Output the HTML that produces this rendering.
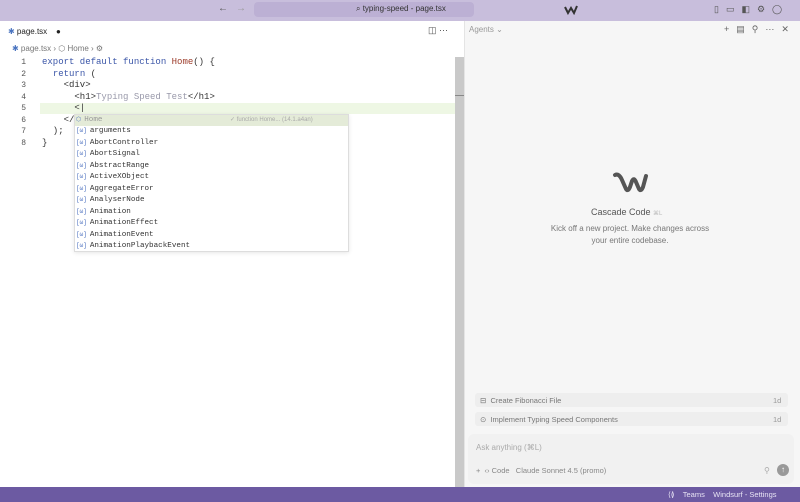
<!DOCTYPE html>
<html><head><meta charset="utf-8"><style>
*{margin:0;padding:0;box-sizing:border-box}
body{width:800px;height:502px;overflow:hidden;background:#fff;font-family:"Liberation Sans",sans-serif;position:relative}
.abs{position:absolute}
.mono{font-family:"Liberation Mono",monospace;font-size:9px;white-space:pre}
.ln{position:absolute;left:14px;width:12px;text-align:right;color:#555;font-family:"Liberation Mono",monospace;font-size:8px}
.cl{position:absolute;left:42px;color:#333}
.kw{color:#3b56a8}.fn{color:#9c3b2a}.tg{color:#444}
.sg{position:absolute;left:76px;font-family:"Liberation Mono",monospace;font-size:7.6px;color:#333}
.sg i{font-style:normal;color:#4a6fbf;font-size:6px;margin-right:3px}
</style></head><body>
<!-- title bar -->
<div class="abs" style="left:0;top:0;width:800px;height:21px;background:#c8bedc"></div>
<div class="abs" style="left:254px;top:2px;width:220px;height:15px;background:#bcb0d4;border-radius:4px"></div>
<div class="abs" style="left:356px;top:4px;font-size:8px;color:#333">⌕ typing-speed - page.tsx</div>
<div class="abs" style="left:218px;top:3px;font-size:10px;color:#555">←</div>
<div class="abs" style="left:236px;top:3px;font-size:10px;color:#999">→</div>
<svg class="abs" style="left:564px;top:5px" width="14" height="10" viewBox="0 0 14 10"><path d="M1 2 L4 8 L7 3 L10 8 L13 1" fill="none" stroke="#333" stroke-width="2"/></svg>
<div class="abs" style="left:714px;top:4px;font-size:9px;color:#555;letter-spacing:7px">▯▭◧⚙◯</div>
<!-- editor tab -->
<div class="abs" style="left:8px;top:27px;font-size:8px;color:#222"><span style="color:#4a74c0">✱</span> page.tsx &nbsp;&nbsp;&nbsp;●</div>
<div class="abs" style="left:12px;top:44px;font-size:8px;color:#777"><span style="color:#4a74c0">✱</span> page.tsx › ⬡ Home › ⚙</div>
<!-- code -->
<div class="abs" style="left:40px;top:103px;width:415px;height:11px;background:#eef7e4"></div>
<div class="ln" style="top:58px">1</div><div class="ln" style="top:69.5px">2</div><div class="ln" style="top:81px">3</div><div class="ln" style="top:92.5px">4</div><div class="ln" style="top:104px">5</div><div class="ln" style="top:115.5px">6</div><div class="ln" style="top:127px">7</div><div class="ln" style="top:138.5px">8</div>
<div class="mono cl" style="top:57px"><span class="kw">export default function</span> <span class="fn">Home</span>() {</div>
<div class="mono cl" style="top:68.5px">  <span class="kw">return</span> (</div>
<div class="mono cl" style="top:80px">    &lt;div&gt;</div>
<div class="mono cl" style="top:91.5px">      &lt;h1&gt;<span style="color:#99a">Typing Speed Test</span>&lt;/h1&gt;</div>
<div class="mono cl" style="top:103px">      &lt;|</div>
<div class="mono cl" style="top:114.5px">    &lt;/d</div>
<div class="mono cl" style="top:126px">  );</div>
<div class="mono cl" style="top:137.5px">}</div>
<!-- suggest -->
<div class="abs" style="left:74px;top:114px;width:275px;height:138px;background:#fff;border:1px solid #ddd;box-shadow:0 1px 4px rgba(0,0,0,.1)"></div>
<div class="abs" style="left:75px;top:115px;width:273px;height:11px;background:#e4ebd8"></div>
<div class="abs" style="left:230px;top:116px;font-size:6px;color:#aaa">✓ function Home... (14.1.a4an)</div>
<div class="sg" style="top:115.5px;color:#999"><i>⬡</i>Home</div>
<div class="sg" style="top:127px"><i>[ω]</i>arguments</div>
<div class="sg" style="top:138.5px"><i>[ω]</i>AbortController</div>
<div class="sg" style="top:150px"><i>[ω]</i>AbortSignal</div>
<div class="sg" style="top:161.5px"><i>[ω]</i>AbstractRange</div>
<div class="sg" style="top:173px"><i>[ω]</i>ActiveXObject</div>
<div class="sg" style="top:184.5px"><i>[ω]</i>AggregateError</div>
<div class="sg" style="top:196px"><i>[ω]</i>AnalyserNode</div>
<div class="sg" style="top:207.5px"><i>[ω]</i>Animation</div>
<div class="sg" style="top:219px"><i>[ω]</i>AnimationEffect</div>
<div class="sg" style="top:230.5px"><i>[ω]</i>AnimationEvent</div>
<div class="sg" style="top:242px"><i>[ω]</i>AnimationPlaybackEvent</div>
<!-- editor actions & scrollbar -->
<div class="abs" style="left:428px;top:25px;font-size:9px;color:#555">◫ ⋯</div>
<div class="abs" style="left:455px;top:57px;width:9px;height:430px;background:#c9c9c9"></div>
<div class="abs" style="left:455px;top:95px;width:9px;height:1px;background:#888"></div>
<!-- right panel -->
<div class="abs" style="left:464px;top:21px;width:336px;height:466px;background:#f6f6f6;border-left:1px solid #e4e4e4"></div>
<div class="abs" style="left:469px;top:25px;font-size:8px;color:#999">Agents ⌄</div>
<div class="abs" style="left:724px;top:24px;font-size:9px;color:#666;letter-spacing:7px">+▤⚲⋯✕</div>
<svg class="abs" style="left:612px;top:171px" width="38" height="22" viewBox="0 0 38 22"><path d="M3 4 Q7 2 10 9 L14 18 Q16 21 18 16 L20 10 Q22 6 24 11 L27 18 Q29 21 31 16 L34 5" fill="none" stroke="#555" stroke-width="4" stroke-linecap="round" stroke-linejoin="round"/></svg>
<div class="abs" style="left:591px;top:207px;font-size:9px;color:#555">Cascade Code <span style="font-size:6px;color:#bbb">⌘L</span></div>
<div class="abs" style="left:550px;top:223px;width:160px;text-align:center;font-size:8px;line-height:12px;color:#777">Kick off a new project. Make changes across your entire codebase.</div>
<div class="abs" style="left:475px;top:393px;width:313px;height:14px;background:#eeeeee;border-radius:3px"></div>
<div class="abs" style="left:475px;top:412px;width:313px;height:14px;background:#eeeeee;border-radius:3px"></div>
<div class="abs" style="left:480px;top:396px;font-size:7.5px;color:#777">⊟ &nbsp;Create Fibonacci File</div>
<div class="abs" style="left:480px;top:415px;font-size:7.5px;color:#777">⊙ &nbsp;Implement Typing Speed Components</div>
<div class="abs" style="left:773px;top:396px;font-size:7.5px;color:#999">1d</div>
<div class="abs" style="left:773px;top:415px;font-size:7.5px;color:#999">1d</div>
<div class="abs" style="left:468px;top:434px;width:326px;height:50px;background:#f1f1f1;border-radius:6px"></div>
<div class="abs" style="left:476px;top:443px;font-size:8px;color:#aaa">Ask anything (⌘L)</div>
<div class="abs" style="left:476px;top:466px;font-size:7.5px;color:#888">+ &nbsp;‹› Code &nbsp;&nbsp;Claude Sonnet 4.5 (promo)</div>
<div class="abs" style="left:764px;top:466px;font-size:8px;color:#aaa">⚲</div>
<div class="abs" style="left:777px;top:464px;width:12px;height:12px;border-radius:50%;background:#999;color:#fff;font-size:8px;text-align:center;line-height:12px">↑</div>
<!-- status bar -->
<div class="abs" style="left:0;top:487px;width:800px;height:15px;background:#6c5aa2"></div>
<div class="abs" style="left:668px;top:490px;font-size:7.5px;color:#e8e4f4">⟨≬ &nbsp;&nbsp;&nbsp;Teams &nbsp;&nbsp;&nbsp;Windsurf - Settings</div>
</body></html>
